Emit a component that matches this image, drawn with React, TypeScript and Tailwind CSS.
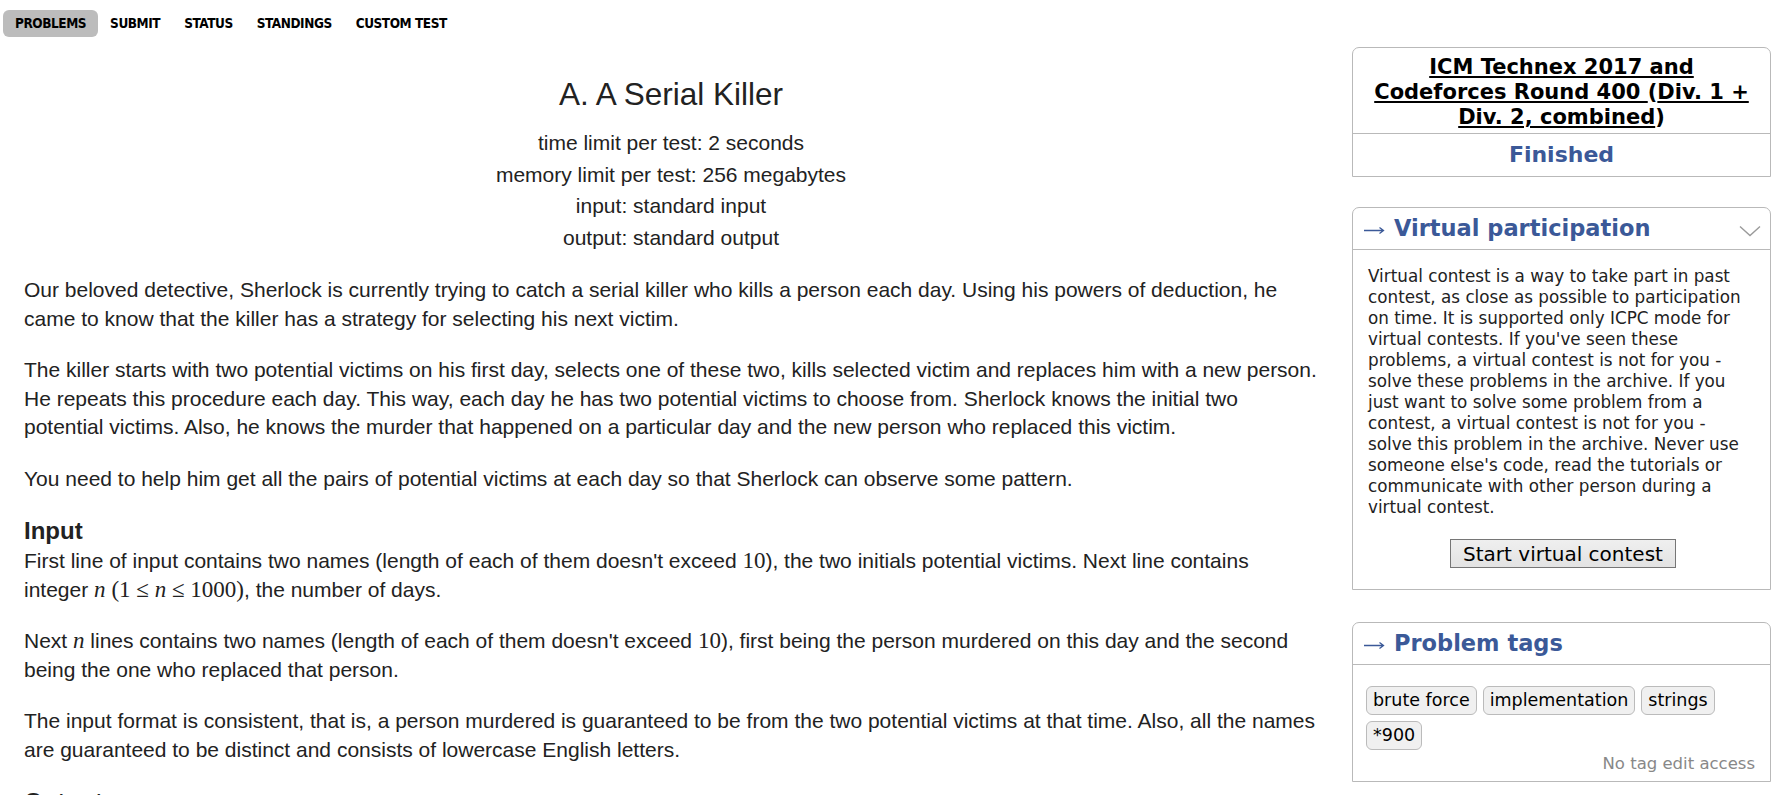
import React from 'react';

const sans = "font-['Liberation_Sans',Arial,sans-serif]";
const verdana = "font-['DejaVu_Sans',Verdana,sans-serif]";
const mathFont = "font-['Liberation_Serif','Times_New_Roman',serif]";

const navItems = ['PROBLEMS', 'SUBMIT', 'STATUS', 'STANDINGS', 'CUSTOM TEST'];

function M({ children, italic }: { children: React.ReactNode; italic?: boolean }) {
  return (
    <span className={`${mathFont} text-[23px] leading-none ${italic ? 'italic' : ''}`}>{children}</span>
  );
}

function SideBox({
  title,
  chevron,
  children,
}: {
  title: string;
  chevron?: boolean;
  children: React.ReactNode;
}) {
  return (
    <div className="border border-[#b9b9b9] rounded-t-[7px]">
      <div className="relative h-[42px] flex items-center pl-[11px] border-b border-[#b9b9b9]">
        <svg width="21" height="10" viewBox="0 0 21 10" className="mr-[9px] mt-[3px]">
          <path d="M0 5.5H19.5M15.5 2.5l4 3-4 3" stroke="#3b5998" strokeWidth="1.3" fill="none" />
        </svg>
        <span className={`${verdana} font-bold text-[22.5px] text-[#3b5998]`}>{title}</span>
        {chevron && (
          <svg width="22" height="12" viewBox="0 0 22 12" className="absolute right-[9px] top-[17px]">
            <path d="M1 1.5l10 9 10-9" stroke="#9a9a9a" strokeWidth="1.4" fill="none" />
          </svg>
        )}
      </div>
      {children}
    </div>
  );
}

export default function App() {
  return (
    <div className="w-[1775px] bg-white text-[#222]">
      {/* top menu */}
      <div className="flex pl-[3px] pt-[10px] h-[47px]">
        {navItems.map((item, i) => (
          <div
            key={item}
            className={`h-[27px] px-[12px] flex items-center rounded-[6px] font-['DejaVu_Sans_Condensed','Liberation_Sans_Narrow',sans-serif] font-bold text-[13.5px] tracking-[-0.45px] text-black ${
              i === 0 ? 'bg-[#bcbcbc]' : ''
            }`}
          >
            {item}
          </div>
        ))}
      </div>

      <div className="flex">
        {/* problem statement */}
        <div className={`w-[1342px] px-[24px] ${sans} text-[21px]`}>
          <div className="text-center">
            <div className="text-[31.5px] leading-[40px] mt-[27px] mb-[13px]">A. A Serial Killer</div>
            <div className="leading-[31.6px]">time limit per test: 2 seconds</div>
            <div className="leading-[31.6px]">memory limit per test: 256 megabytes</div>
            <div className="leading-[31.6px]">input: standard input</div>
            <div className="leading-[31.6px]">output: standard output</div>
          </div>

          <div className="leading-[28.5px] mt-[23px]">
            <p className="mb-[23px]">
              Our beloved detective, Sherlock is currently trying to catch a serial killer who kills a person each day. Using his powers of deduction, he came to know that the killer has a strategy for selecting his next victim.
            </p>
            <p className="mb-[23px]">
              The killer starts with two potential victims on his first day, selects one of these two, kills selected victim and replaces him with a new person. He repeats this procedure each day. This way, each day he has two potential victims to choose from. Sherlock knows the initial two potential victims. Also, he knows the murder that happened on a particular day and the new person who replaced this victim.
            </p>
            <p className="mb-[23px]">
              You need to help him get all the pairs of potential victims at each day so that Sherlock can observe some pattern.
            </p>

            <div className="font-bold text-[24px] leading-[30px] mt-[2px]">Input</div>
            <p className="mb-[23px] mt-[1px]">
              First line of input contains two names (length of each of them doesn't exceed <M>10</M>), the two initials potential victims. Next line contains integer <M italic>n</M> <M>(1 ≤ <i>n</i> ≤ 1000)</M>, the number of days.
            </p>
            <p className="mb-[23px]">
              Next <M italic>n</M> lines contains two names (length of each of them doesn't exceed <M>10</M>), first being the person murdered on this day and the second being the one who replaced that person.
            </p>
            <p className="mb-[23px]">
              The input format is consistent, that is, a person murdered is guaranteed to be from the two potential victims at that time. Also, all the names are guaranteed to be distinct and consists of lowercase English letters.
            </p>
            <div className="font-bold text-[24px] leading-[30px]">Output</div>
          </div>
        </div>

        {/* sidebar */}
        <div className={`w-[419px] ml-[10px] ${verdana} flex flex-col`}>
          <div className="border border-[#b9b9b9] rounded-t-[7px]">
            <div className="text-center font-bold text-[21px] leading-[25px] text-black px-[16px] pt-[7px] pb-[3px] border-b border-[#b9b9b9]">
              <span className="underline">ICM Technex 2017 and Codeforces Round 400 </span>(
              <span className="underline">Div. 1 + Div. 2, combined</span>)
            </div>
            <div className="text-center font-bold text-[22px] leading-[42px] text-[#3b5998]">Finished</div>
          </div>

          <div className="mt-[30px]">
            <SideBox title="Virtual participation" chevron>
              <div className="pl-[15px] pr-[12px] pt-[16px] pb-[21px] text-[16.8px] leading-[21px] text-[#222]">
                <div>
                  Virtual contest is a way to take part in past contest, as close as possible to participation on time. It is supported only ICPC mode for virtual contests. If you've seen these problems, a virtual contest is not for you - solve these problems in the archive. If you just want to solve some problem from a contest, a virtual contest is not for you -<br />
                  solve this problem in the archive. Never use someone else's code, read the tutorials or communicate with other person during a virtual contest.
                </div>
                <div className="flex justify-center mt-[21px]">
                  <button className="h-[29px] px-[12px] border border-[#767676] bg-[linear-gradient(#efefef,#e3e3e3)] text-[20px] leading-[26px] text-black">
                    Start virtual contest
                  </button>
                </div>
              </div>
            </SideBox>
          </div>

          <div className="mt-[32px]">
            <SideBox title="Problem tags">
              <div className="px-[13px] pt-[21px] pb-[5px] text-[17.5px] text-black">
                <div className="flex flex-wrap gap-x-[6px] gap-y-[6px]">
                  {['brute force', 'implementation', 'strings', '*900'].map((t) => (
                    <span
                      key={t}
                      className="h-[29px] px-[6px] flex items-center rounded-[6px] border border-[#bbb] bg-[#f0f0f0]"
                    >
                      {t}
                    </span>
                  ))}
                </div>
                <div className="text-right text-[16.5px] text-[#888] mt-[2px] leading-[24px] pr-[2px]">No tag edit access</div>
              </div>
            </SideBox>
          </div>
        </div>
      </div>
    </div>
  );
}
